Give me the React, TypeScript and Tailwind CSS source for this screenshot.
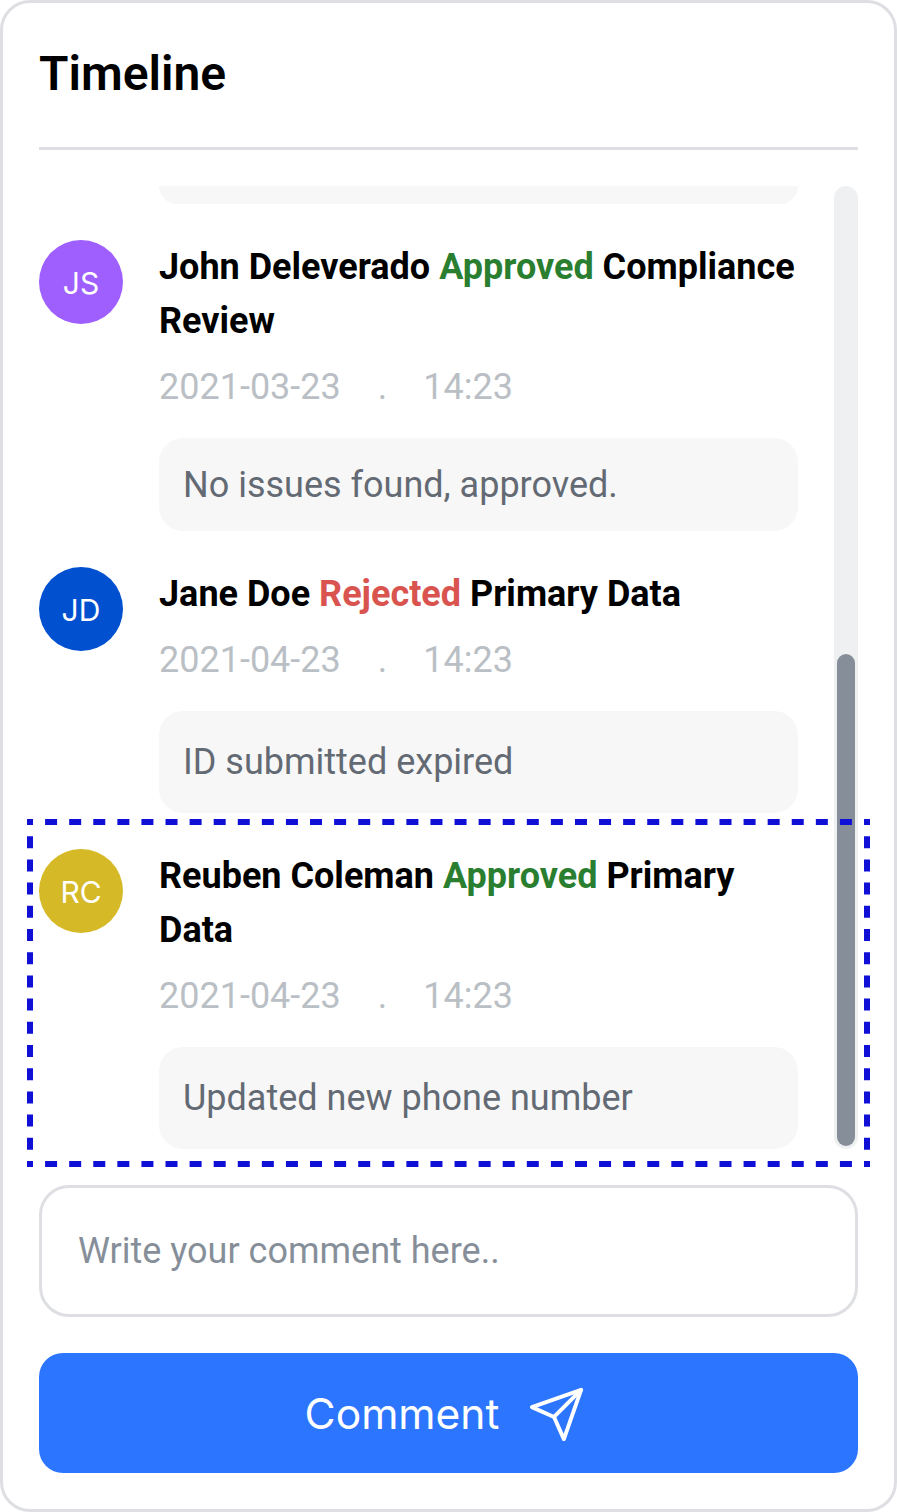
const roboto = "font-['Roboto',sans-serif]";

function Avatar({ initials, color }: { initials: string; color: string }) {
  return (
    <div
      className={`flex h-[84px] w-[84px] shrink-0 items-center justify-center rounded-full pt-[2px] font-['Inter',sans-serif] text-[30px] text-white ${color}`}
    >
      {initials}
    </div>
  );
}

function Entry({
  initials,
  color,
  date,
  note,
  boxHeight,
  children,
}: {
  initials: string;
  color: string;
  date: string;
  note: string;
  boxHeight: string;
  children: React.ReactNode;
}) {
  return (
    <div className="flex gap-9">
      <Avatar initials={initials} color={color} />
      <div className="min-w-0 flex-1">
        <p className="text-[36px] font-bold leading-[54px] text-black">{children}</p>
        <div className="mt-[18px] flex h-[42px] items-center text-[36px] leading-[42px] text-[#babfc5]">
          <span>{date}</span>
          <span className="ml-[37px]">.</span>
          <span className="ml-[36px]">14:23</span>
        </div>
        <div
          className={`mt-[30px] flex items-center rounded-[24px] bg-[#f7f7f8] px-6 text-[36px] text-[#636a73] ${boxHeight}`}
        >
          {note}
        </div>
      </div>
    </div>
  );
}

export default function App() {
  return (
    <div
      className={`relative flex h-[1512px] w-[897px] flex-col rounded-[30px] border-[3px] border-[#dedfe3] bg-white px-9 ${roboto}`}
    >
      <h1 className="mt-[38px] mb-[-1px] text-[48px] font-semibold leading-[66px] text-black">Timeline</h1>
      <div className="mt-[41px] h-[3px] bg-[#dedfe3]" />

      <div className="mt-9 flex h-[963px] gap-9 overflow-hidden">
        <div className="flex w-[759px] flex-col gap-9">
          <div className="ml-[120px] h-[18px] shrink-0 rounded-b-[24px] bg-[#f7f7f8]" />
          <Entry
            initials="JS"
            color="bg-[#9f5fff]"
            date="2021-03-23"
            note="No issues found, approved."
            boxHeight="h-[93px]"
          >
            John Deleverado <span className="text-[#2a7e2f]">Approved</span> Compliance Review
          </Entry>
          <Entry
            initials="JD"
            color="bg-[#0050d0]"
            date="2021-04-23"
            note="ID submitted expired"
            boxHeight="h-[102px]"
          >
            Jane Doe <span className="text-[#d9534f]">Rejected</span> Primary Data
          </Entry>
          <Entry
            initials="RC"
            color="bg-[#d5b926]"
            date="2021-04-23"
            note="Updated new phone number"
            boxHeight="h-[102px]"
          >
            Reuben Coleman <span className="text-[#2a7e2f]">Approved</span> Primary Data
          </Entry>
        </div>
        <div className="flex w-6 flex-col justify-end rounded-[12px] bg-[#eff0f2] p-[3px]">
          <div className="h-[492px] rounded-[9px] bg-[#868f99]" />
        </div>
      </div>

      <div className="mt-9 flex h-[132px] items-center rounded-[30px] border-[3px] border-[#dedfe3] px-9 text-[36px] text-[#868f99]">
        Write your comment here..
      </div>

      <button className="mt-9 flex h-[120px] items-center justify-center gap-[28px] rounded-[24px] bg-[#2b75ff] pr-[6px] pt-[2px] font-['Inter',sans-serif] text-[42.5px] text-white">
        Comment
        <svg
          width="59"
          height="59"
          viewBox="0 0 24 24"
          fill="none"
          stroke="currentColor"
          strokeWidth="1.6"
          strokeLinecap="round"
          strokeLinejoin="round"
        >
          <path d="m22 2-7 20-4-9-9-4Z" />
          <path d="M22 2 11 13" />
        </svg>
      </button>

      {/* dashed selection frame, half a dash at each corner */}
      <svg
        className="pointer-events-none absolute left-[24px] top-[816px]"
        width="843"
        height="348"
        stroke="#0f0fd6"
        strokeWidth="6"
      >
        <line x1="0" y1="3" x2="843" y2="3" strokeDasharray="12 12.086" strokeDashoffset="6" />
        <line x1="0" y1="345" x2="843" y2="345" strokeDasharray="12 12.086" strokeDashoffset="6" />
        <line x1="3" y1="0" x2="3" y2="348" strokeDasharray="12 11.2" strokeDashoffset="6" />
        <line x1="840" y1="0" x2="840" y2="348" strokeDasharray="12 11.2" strokeDashoffset="6" />
      </svg>
    </div>
  );
}
